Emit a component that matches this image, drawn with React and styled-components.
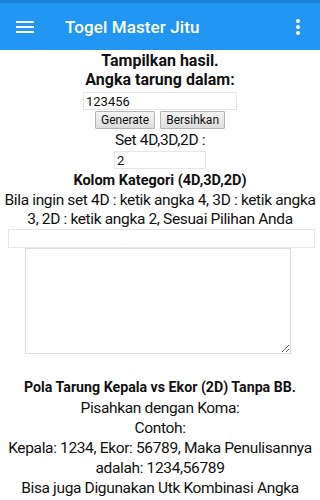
import styled, { createGlobalStyle } from "styled-components";

const GlobalStyle = createGlobalStyle`
  html, body {
    margin: 0;
    padding: 0;
    background: #fff;
    font-family: Roboto, "Noto Sans", sans-serif;
    color: #111;
  }
`;

const AppBar = styled.header`
  height: 47px;
  border-top: 3px solid #1b82dc;
  background: #2196f3;
  display: flex;
  align-items: center;
  padding: 0 20px 0 16px;
  color: #fff;
`;

const Title = styled.h1`
  margin: 0 0 0 31px;
  flex: 1;
  font-size: 17px;
  font-weight: 500;
  letter-spacing: 0.1px;
`;

const IconButton = styled.span`
  display: flex;
  align-items: center;
`;

const Page = styled.main`
  padding: 0 2px;
  text-align: center;
`;

const Heading = styled.div`
  font-weight: bold;
  font-size: ${(p) => p.size || 16}px;
  line-height: ${(p) => p.lh || 19}px;
  margin-top: ${(p) => p.top || 0}px;
`;

const Text = styled.div`
  font-size: 15.5px;
  line-height: ${(p) => p.lh || 20}px;
  letter-spacing: -0.35px;
`;

const Field = styled.input`
  display: block;
  margin: ${(p) => p.top || 0}px auto 0;
  box-sizing: border-box;
  width: ${(p) => p.w}px;
  height: 18px;
  border: 1px solid #e6e6e6;
  padding: 0 2px;
  font-family: Roboto, sans-serif;
  font-size: 13px;
  color: #111;
  outline: none;
`;

const Buttons = styled.div`
  display: flex;
  justify-content: center;
  gap: 5px;
  margin: 1px 0 0;
`;

const Button = styled.button`
  height: 18px;
  padding: 0 5px;
  font-family: Roboto, sans-serif;
  font-size: 12px;
  color: #111;
  border: 1px solid #b5b5b5;
  border-radius: 1px;
  background: linear-gradient(#f4f4f4, #dcdcdc);
`;

const WideField = styled(Field)`
  width: 307px;
  height: 19px;
  margin: 0 0 0 6px;
  border-color: #e8e8e8;
`;

const Area = styled.textarea`
  display: block;
  box-sizing: border-box;
  width: 266px;
  height: 106px;
  margin: 0 0 0 23px;
  border: 1px solid #dcdcdc;
  resize: both;
`;

const Section = styled.section`
  margin-top: 22px;
`;

export default function App() {
  return (
    <>
      <GlobalStyle />
      <AppBar>
        <IconButton>
          <svg width="18" height="14" viewBox="0 0 18 14">
            <rect y="1" width="18" height="2" fill="#fff" />
            <rect y="6" width="18" height="2" fill="#fff" />
            <rect y="11" width="18" height="2" fill="#fff" />
          </svg>
        </IconButton>
        <Title>Togel Master Jitu</Title>
        <IconButton>
          <svg width="4" height="16" viewBox="0 0 4 16">
            <circle cx="2" cy="2" r="2" fill="#fff" />
            <circle cx="2" cy="8" r="2" fill="#fff" />
            <circle cx="2" cy="14" r="2" fill="#fff" />
          </svg>
        </IconButton>
      </AppBar>
      <Page>
        <Heading size={16} lh={19} top={1}>Tampilkan hasil.</Heading>
        <Heading size={16} lh={19}>Angka tarung dalam:</Heading>
        <Field w={154} top={3} defaultValue="123456" />
        <Buttons>
          <Button>Generate</Button>
          <Button>Bersihkan</Button>
        </Buttons>
        <Text style={{ marginTop: 1 }}>Set 4D,3D,2D :</Text>
        <Field w={92} top={1} defaultValue="2" />
        <Heading size={14.5} lh={21} top={1}>Kolom Kategori (4D,3D,2D)</Heading>
        <Text lh={19}>Bila ingin set 4D : ketik angka 4, 3D : ketik angka 3, 2D : ketik angka 2, Sesuai Pilihan Anda</Text>
        <WideField />
        <Area />
        <Section>
          <Heading size={14.2} lh={22}>Pola Tarung Kepala vs Ekor (2D) Tanpa BB.</Heading>
          <Text>Pisahkan dengan Koma:</Text>
          <Text>Contoh:</Text>
          <Text>Kepala: 1234, Ekor: 56789, Maka Penulisannya adalah: 1234,56789</Text>
          <Text>Bisa juga Digunakan Utk Kombinasi Angka (Berikut Urutan)</Text>
        </Section>
      </Page>
    </>
  );
}
